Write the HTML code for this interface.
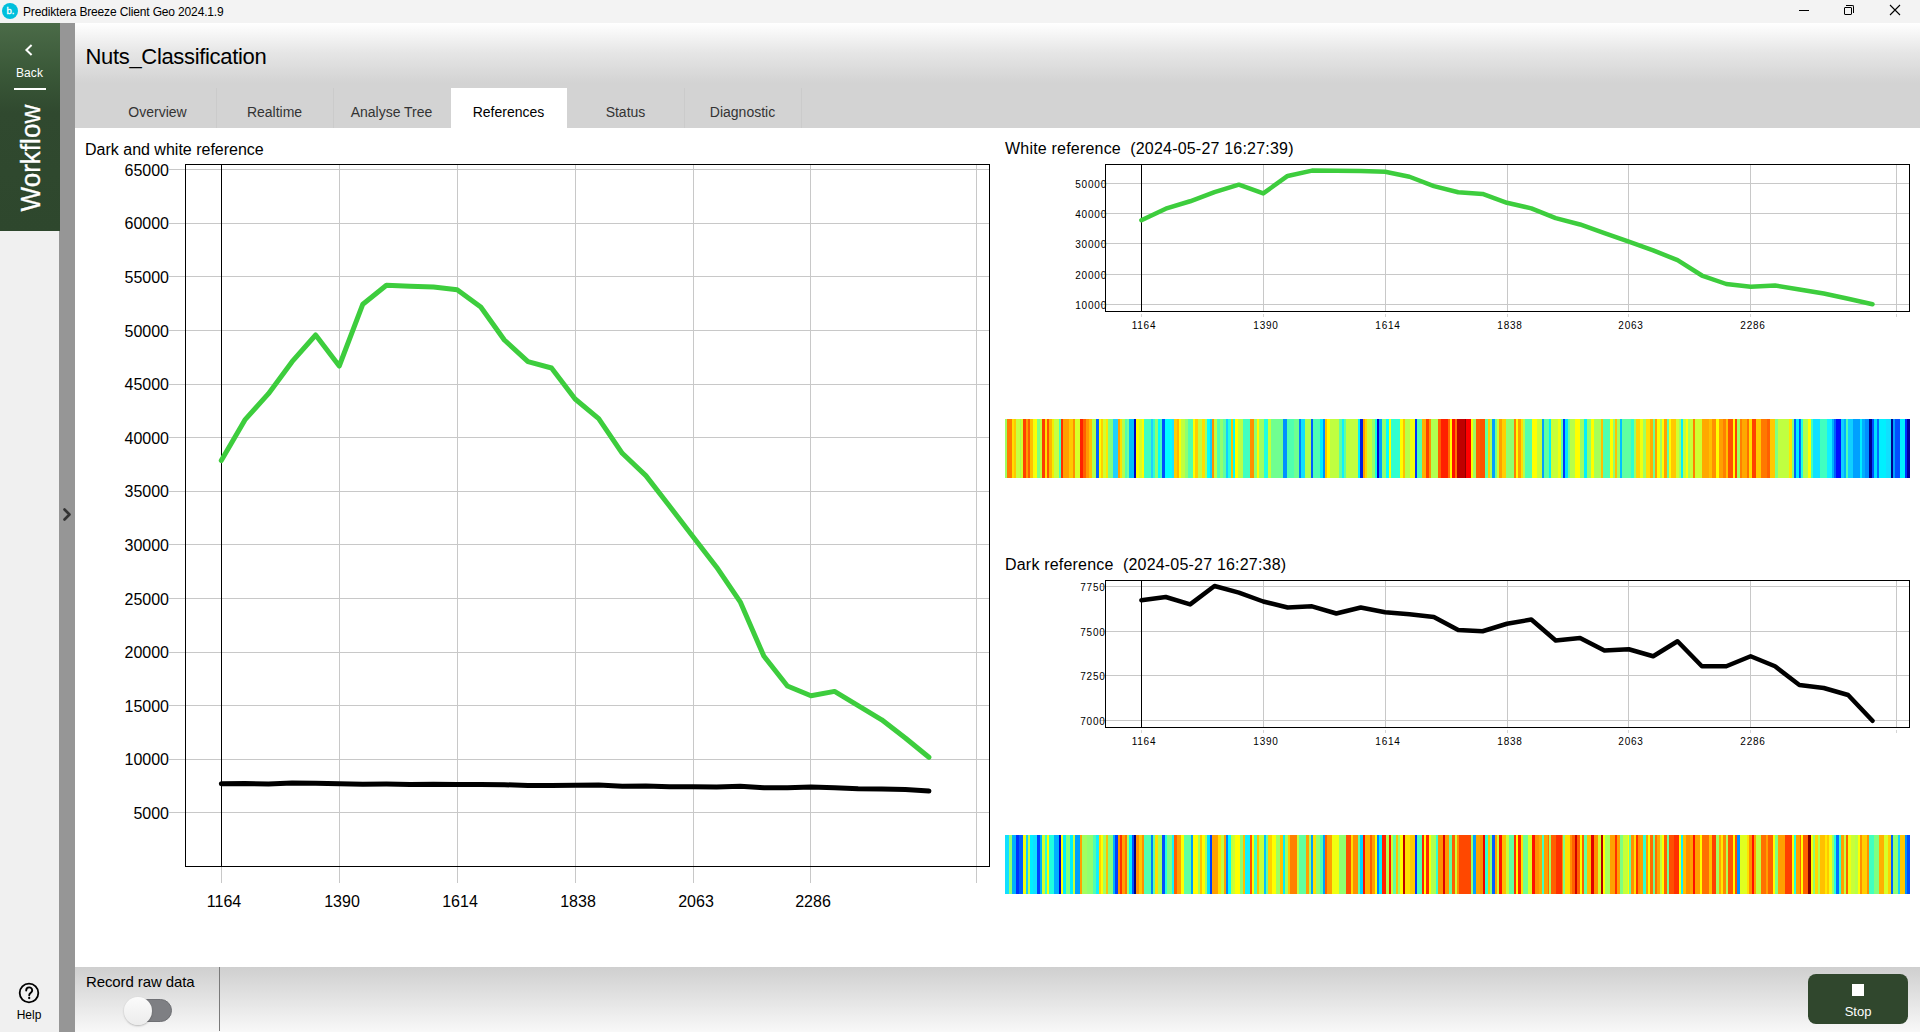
<!DOCTYPE html>
<html><head><meta charset="utf-8"><title>Prediktera Breeze Client Geo 2024.1.9</title>
<style>
html,body{margin:0;padding:0;width:1920px;height:1032px;overflow:hidden;background:#fff;}
body{position:relative;font-family:"Liberation Sans", sans-serif;}
.a{position:absolute;}
.t{position:absolute;white-space:nowrap;line-height:1;}
svg{position:absolute;left:0;top:0;}
</style></head><body>

<div class="a" style="left:0;top:0;width:1920px;height:23px;background:#f3f3f3;"></div>
<div class="a" style="left:2px;top:3px;width:16px;height:16px;border-radius:50%;background:#00bfdc;"></div>
<div class="t" style="left:6.5px;top:5.5px;font-size:9.5px;color:#fff;-webkit-text-stroke:0.3px #fff;">b.</div>
<div class="t" style="left:23px;top:6px;font-size:12px;letter-spacing:-0.15px;color:#000;">Prediktera Breeze Client Geo 2024.1.9</div>
<div class="a" style="left:1799px;top:10px;width:10px;height:1px;background:#000;"></div>
<div class="a" style="left:1844px;top:7px;width:6px;height:6px;border:1px solid #000;border-radius:1px;"></div>
<div class="a" style="left:1846px;top:5px;width:7px;height:7px;border-top:1px solid #000;border-right:1px solid #000;border-top-right-radius:2px;"></div>
<svg width="1920" height="23" style="left:0;top:0;"><path d="M1890 5 L1900 15 M1900 5 L1890 15" stroke="#000" stroke-width="1.1" fill="none"/></svg>

<div class="a" style="left:0;top:23px;width:59px;height:1009px;background:#f0f0f0;"></div>
<div class="a" style="left:59px;top:23px;width:16px;height:1009px;background:#969696;"></div>
<div class="a" style="left:0;top:23px;width:60px;height:208px;background:linear-gradient(#4b6b48 0px,#3a5838 50px,#30492f 90px,#2e472d 208px);"></div>
<svg width="60" height="230" style="left:0;top:0;"><path d="M31.6 45 L26.4 50 L31.6 55" stroke="#fff" stroke-width="2" fill="none"/></svg>
<div class="t" style="left:0;top:66.5px;width:59px;text-align:center;font-size:12px;letter-spacing:0.1px;color:#fff;">Back</div>
<div class="a" style="left:14px;top:88px;width:32px;height:2px;background:#fff;"></div>
<div class="t" style="left:-23px;top:149px;width:106px;text-align:center;font-size:28.5px;-webkit-text-stroke:0.3px #fff;font-variant-ligatures:none;color:#fff;transform:rotate(-90deg) scaleX(0.915);transform-origin:53px 14px;">Workflow</div>
<svg width="60" height="1032" style="left:0;top:0;"><circle cx="29" cy="993" r="9.3" stroke="#000" stroke-width="1.8" fill="none"/></svg>
<svg width="60" height="1032" style="left:0;top:0;"><path d="M26.2 990.6 C26.2 986.4 32.2 986.4 32.2 990.4 C32.2 992.6 29.2 992.8 29.2 995.2" stroke="#000" stroke-width="1.9" fill="none" stroke-linecap="round"/><circle cx="29.2" cy="998" r="1.15" fill="#000"/></svg>
<div class="t" style="left:0;top:1009px;width:58px;text-align:center;font-size:12px;color:#000;">Help</div>
<svg width="80" height="1032" style="left:0;top:0;"><path d="M64.5 509.5 L69.5 514.5 L64.5 519.5" stroke="#333" stroke-width="2.6" stroke-linecap="round" stroke-linejoin="round" fill="none"/></svg>

<div class="a" style="left:75px;top:23px;width:1845px;height:65px;background:linear-gradient(#ffffff 0%,#e6e6e6 45%,#d3d3d3 92%,#d3d3d3 100%);"></div>
<div class="t" style="left:85.5px;top:46px;font-size:22px;letter-spacing:-0.33px;color:#000;">Nuts_Classification</div>
<div class="a" style="left:75px;top:88px;width:1845px;height:40px;background:#d3d3d3;"></div>

<div class="t" style="left:99px;top:104.5px;width:117px;text-align:center;font-size:14px;color:#333;">Overview</div>
<div class="t" style="left:216px;top:104.5px;width:117px;text-align:center;font-size:14px;color:#333;">Realtime</div>
<div class="t" style="left:333px;top:104.5px;width:117px;text-align:center;font-size:14px;color:#333;">Analyse Tree</div>
<div class="a" style="left:451px;top:88px;width:116px;height:40px;background:#fff;"></div>
<div class="t" style="left:450px;top:104.5px;width:117px;text-align:center;font-size:14px;color:#000;">References</div>
<div class="t" style="left:567px;top:104.5px;width:117px;text-align:center;font-size:14px;color:#333;">Status</div>
<div class="t" style="left:684px;top:104.5px;width:117px;text-align:center;font-size:14px;color:#333;">Diagnostic</div>
<div class="a" style="left:216px;top:88px;width:1px;height:40px;background:#cbcbcb;"></div>
<div class="a" style="left:333px;top:88px;width:1px;height:40px;background:#cbcbcb;"></div>
<div class="a" style="left:684px;top:88px;width:1px;height:40px;background:#cbcbcb;"></div>
<div class="a" style="left:801px;top:88px;width:1px;height:40px;background:#cbcbcb;"></div>
<svg width="1920" height="1032" style="left:0;top:0;" shape-rendering="crispEdges">
<line x1="169" y1="812.5" x2="989" y2="812.5" stroke="#c8c8c8" stroke-width="1"/>
<line x1="169" y1="759.5" x2="989" y2="759.5" stroke="#c8c8c8" stroke-width="1"/>
<line x1="169" y1="705.5" x2="989" y2="705.5" stroke="#c8c8c8" stroke-width="1"/>
<line x1="169" y1="652.5" x2="989" y2="652.5" stroke="#c8c8c8" stroke-width="1"/>
<line x1="169" y1="598.5" x2="989" y2="598.5" stroke="#c8c8c8" stroke-width="1"/>
<line x1="169" y1="544.5" x2="989" y2="544.5" stroke="#c8c8c8" stroke-width="1"/>
<line x1="169" y1="491.5" x2="989" y2="491.5" stroke="#c8c8c8" stroke-width="1"/>
<line x1="169" y1="437.5" x2="989" y2="437.5" stroke="#c8c8c8" stroke-width="1"/>
<line x1="169" y1="384.5" x2="989" y2="384.5" stroke="#c8c8c8" stroke-width="1"/>
<line x1="169" y1="330.5" x2="989" y2="330.5" stroke="#c8c8c8" stroke-width="1"/>
<line x1="169" y1="276.5" x2="989" y2="276.5" stroke="#c8c8c8" stroke-width="1"/>
<line x1="169" y1="223.5" x2="989" y2="223.5" stroke="#c8c8c8" stroke-width="1"/>
<line x1="169" y1="169.5" x2="989" y2="169.5" stroke="#c8c8c8" stroke-width="1"/>
<line x1="339.5" y1="165" x2="339.5" y2="883" stroke="#c8c8c8" stroke-width="1"/>
<line x1="457.5" y1="165" x2="457.5" y2="883" stroke="#c8c8c8" stroke-width="1"/>
<line x1="575.5" y1="165" x2="575.5" y2="883" stroke="#c8c8c8" stroke-width="1"/>
<line x1="693.5" y1="165" x2="693.5" y2="883" stroke="#c8c8c8" stroke-width="1"/>
<line x1="810.5" y1="165" x2="810.5" y2="883" stroke="#c8c8c8" stroke-width="1"/>
<line x1="976.5" y1="165" x2="976.5" y2="883" stroke="#c8c8c8" stroke-width="1"/>
<line x1="221.5" y1="866" x2="221.5" y2="883" stroke="#c8c8c8" stroke-width="1"/>
<line x1="221.5" y1="165" x2="221.5" y2="866" stroke="#000" stroke-width="1"/>
<rect x="185.5" y="164.5" width="804" height="702" fill="none" stroke="#000" stroke-width="1"/>
</svg>
<svg width="1920" height="1032" style="left:0;top:0;"><polyline points="221.30,460.60 244.89,419.90 268.47,393.70 292.06,361.70 315.65,335.00 339.24,366.00 362.82,304.20 386.41,285.30 410.00,286.20 433.58,287.00 457.17,289.70 480.76,307.00 504.34,340.00 527.93,361.70 551.52,368.00 575.11,399.00 598.69,418.70 622.28,453.30 645.87,475.60 669.45,506.00 693.04,536.70 716.63,567.20 740.21,601.80 763.80,656.00 787.39,686.00 810.97,695.80 834.56,691.40 858.15,705.60 881.74,719.80 905.32,738.00 928.91,757.30" fill="none" stroke="#3dcd3d" stroke-width="5" stroke-linejoin="round" stroke-linecap="round"/><polyline points="221.30,783.75 244.89,783.55 268.47,783.99 292.06,782.89 315.65,783.29 339.24,783.82 362.82,784.18 386.41,784.11 410.00,784.54 433.58,784.18 457.17,784.47 480.76,784.58 504.34,784.75 527.93,785.53 551.52,785.60 575.11,785.15 598.69,784.90 622.28,786.16 645.87,786.01 669.45,786.76 693.04,786.68 716.63,787.10 740.21,786.20 763.80,787.70 787.39,787.70 810.97,787.10 834.56,787.70 858.15,788.83 881.74,789.01 905.32,789.43 928.91,790.97" fill="none" stroke="#000" stroke-width="5" stroke-linejoin="round" stroke-linecap="round"/></svg>
<div class="t" style="left:85px;top:142px;font-size:16px;color:#000;">Dark and white reference</div>
<div class="t" style="left:62px;top:805.9px;width:107px;text-align:right;font-size:16px;color:#000;">5000</div>
<div class="t" style="left:62px;top:752.3px;width:107px;text-align:right;font-size:16px;color:#000;">10000</div>
<div class="t" style="left:62px;top:698.7px;width:107px;text-align:right;font-size:16px;color:#000;">15000</div>
<div class="t" style="left:62px;top:645.1px;width:107px;text-align:right;font-size:16px;color:#000;">20000</div>
<div class="t" style="left:62px;top:591.5px;width:107px;text-align:right;font-size:16px;color:#000;">25000</div>
<div class="t" style="left:62px;top:537.9px;width:107px;text-align:right;font-size:16px;color:#000;">30000</div>
<div class="t" style="left:62px;top:484.3px;width:107px;text-align:right;font-size:16px;color:#000;">35000</div>
<div class="t" style="left:62px;top:430.7px;width:107px;text-align:right;font-size:16px;color:#000;">40000</div>
<div class="t" style="left:62px;top:377.1px;width:107px;text-align:right;font-size:16px;color:#000;">45000</div>
<div class="t" style="left:62px;top:323.5px;width:107px;text-align:right;font-size:16px;color:#000;">50000</div>
<div class="t" style="left:62px;top:269.9px;width:107px;text-align:right;font-size:16px;color:#000;">55000</div>
<div class="t" style="left:62px;top:216.3px;width:107px;text-align:right;font-size:16px;color:#000;">60000</div>
<div class="t" style="left:62px;top:162.7px;width:107px;text-align:right;font-size:16px;color:#000;">65000</div>
<div class="t" style="left:174.0px;top:894px;width:100px;text-align:center;font-size:16px;color:#000;">1164</div>
<div class="t" style="left:292.0px;top:894px;width:100px;text-align:center;font-size:16px;color:#000;">1390</div>
<div class="t" style="left:410.0px;top:894px;width:100px;text-align:center;font-size:16px;color:#000;">1614</div>
<div class="t" style="left:528.0px;top:894px;width:100px;text-align:center;font-size:16px;color:#000;">1838</div>
<div class="t" style="left:646.0px;top:894px;width:100px;text-align:center;font-size:16px;color:#000;">2063</div>
<div class="t" style="left:763.0px;top:894px;width:100px;text-align:center;font-size:16px;color:#000;">2286</div>
<svg width="1920" height="1032" style="left:0;top:0;" shape-rendering="crispEdges">
<line x1="1100" y1="183.5" x2="1909" y2="183.5" stroke="#c8c8c8" stroke-width="1"/>
<line x1="1100" y1="213.5" x2="1909" y2="213.5" stroke="#c8c8c8" stroke-width="1"/>
<line x1="1100" y1="243.5" x2="1909" y2="243.5" stroke="#c8c8c8" stroke-width="1"/>
<line x1="1100" y1="274.5" x2="1909" y2="274.5" stroke="#c8c8c8" stroke-width="1"/>
<line x1="1100" y1="304.5" x2="1909" y2="304.5" stroke="#c8c8c8" stroke-width="1"/>
<line x1="1263.5" y1="164.5" x2="1263.5" y2="311.5" stroke="#c8c8c8" stroke-width="1"/>
<line x1="1263.5" y1="313.5" x2="1263.5" y2="316.5" stroke="#d4d4d4" stroke-width="1"/>
<line x1="1385.5" y1="164.5" x2="1385.5" y2="311.5" stroke="#c8c8c8" stroke-width="1"/>
<line x1="1385.5" y1="313.5" x2="1385.5" y2="316.5" stroke="#d4d4d4" stroke-width="1"/>
<line x1="1507.5" y1="164.5" x2="1507.5" y2="311.5" stroke="#c8c8c8" stroke-width="1"/>
<line x1="1507.5" y1="313.5" x2="1507.5" y2="316.5" stroke="#d4d4d4" stroke-width="1"/>
<line x1="1628.5" y1="164.5" x2="1628.5" y2="311.5" stroke="#c8c8c8" stroke-width="1"/>
<line x1="1628.5" y1="313.5" x2="1628.5" y2="316.5" stroke="#d4d4d4" stroke-width="1"/>
<line x1="1750.5" y1="164.5" x2="1750.5" y2="311.5" stroke="#c8c8c8" stroke-width="1"/>
<line x1="1750.5" y1="313.5" x2="1750.5" y2="316.5" stroke="#d4d4d4" stroke-width="1"/>
<line x1="1896.5" y1="164.5" x2="1896.5" y2="311.5" stroke="#c8c8c8" stroke-width="1"/>
<line x1="1896.5" y1="313.5" x2="1896.5" y2="316.5" stroke="#d4d4d4" stroke-width="1"/>
<line x1="1141.5" y1="313.5" x2="1141.5" y2="316.5" stroke="#d4d4d4" stroke-width="1"/>
<line x1="1141.5" y1="164.5" x2="1141.5" y2="311.5" stroke="#000" stroke-width="1"/>
<rect x="1105.5" y="164.5" width="804" height="147.0" fill="none" stroke="#000" stroke-width="1"/>
</svg>
<svg width="1920" height="1032" style="left:0;top:0;"><polyline points="1141.40,220.20 1165.77,208.68 1190.14,201.27 1214.51,192.21 1238.88,184.66 1263.25,193.43 1287.62,175.94 1311.99,170.59 1336.36,170.84 1360.73,171.07 1385.10,171.83 1409.47,176.73 1433.84,186.07 1458.21,192.21 1482.58,193.99 1506.95,202.77 1531.32,208.34 1555.69,218.14 1580.06,224.45 1604.43,233.05 1628.80,241.74 1653.17,250.37 1677.54,260.17 1701.91,275.51 1726.28,284.00 1750.65,286.77 1775.02,285.52 1799.39,289.54 1823.76,293.56 1848.13,298.71 1872.50,304.18" fill="none" stroke="#3dcd3d" stroke-width="4.5" stroke-linejoin="round" stroke-linecap="round"/></svg>
<div class="t" style="left:1005px;top:141px;font-size:16px;letter-spacing:0.2px;color:#000;white-space:pre;">White reference  (2024-05-27 16:27:39)</div>
<div class="t" style="left:1042px;top:179.7px;width:65px;text-align:right;font-size:10px;letter-spacing:0.8px;color:#000;">50000</div>
<div class="t" style="left:1042px;top:210.1px;width:65px;text-align:right;font-size:10px;letter-spacing:0.8px;color:#000;">40000</div>
<div class="t" style="left:1042px;top:240.4px;width:65px;text-align:right;font-size:10px;letter-spacing:0.8px;color:#000;">30000</div>
<div class="t" style="left:1042px;top:270.8px;width:65px;text-align:right;font-size:10px;letter-spacing:0.8px;color:#000;">20000</div>
<div class="t" style="left:1042px;top:301.1px;width:65px;text-align:right;font-size:10px;letter-spacing:0.8px;color:#000;">10000</div>
<div class="t" style="left:1114.0px;top:321.0px;width:60px;text-align:center;font-size:10px;letter-spacing:0.8px;color:#000;">1164</div>
<div class="t" style="left:1236.0px;top:321.0px;width:60px;text-align:center;font-size:10px;letter-spacing:0.8px;color:#000;">1390</div>
<div class="t" style="left:1358.0px;top:321.0px;width:60px;text-align:center;font-size:10px;letter-spacing:0.8px;color:#000;">1614</div>
<div class="t" style="left:1480.0px;top:321.0px;width:60px;text-align:center;font-size:10px;letter-spacing:0.8px;color:#000;">1838</div>
<div class="t" style="left:1601.0px;top:321.0px;width:60px;text-align:center;font-size:10px;letter-spacing:0.8px;color:#000;">2063</div>
<div class="t" style="left:1723.0px;top:321.0px;width:60px;text-align:center;font-size:10px;letter-spacing:0.8px;color:#000;">2286</div>
<svg width="1920" height="1032" style="left:0;top:0;" shape-rendering="crispEdges">
<line x1="1100" y1="586.5" x2="1909" y2="586.5" stroke="#c8c8c8" stroke-width="1"/>
<line x1="1100" y1="631.5" x2="1909" y2="631.5" stroke="#c8c8c8" stroke-width="1"/>
<line x1="1100" y1="675.5" x2="1909" y2="675.5" stroke="#c8c8c8" stroke-width="1"/>
<line x1="1100" y1="720.5" x2="1909" y2="720.5" stroke="#c8c8c8" stroke-width="1"/>
<line x1="1263.5" y1="580.5" x2="1263.5" y2="727.5" stroke="#c8c8c8" stroke-width="1"/>
<line x1="1263.5" y1="729.5" x2="1263.5" y2="732.5" stroke="#d4d4d4" stroke-width="1"/>
<line x1="1385.5" y1="580.5" x2="1385.5" y2="727.5" stroke="#c8c8c8" stroke-width="1"/>
<line x1="1385.5" y1="729.5" x2="1385.5" y2="732.5" stroke="#d4d4d4" stroke-width="1"/>
<line x1="1507.5" y1="580.5" x2="1507.5" y2="727.5" stroke="#c8c8c8" stroke-width="1"/>
<line x1="1507.5" y1="729.5" x2="1507.5" y2="732.5" stroke="#d4d4d4" stroke-width="1"/>
<line x1="1628.5" y1="580.5" x2="1628.5" y2="727.5" stroke="#c8c8c8" stroke-width="1"/>
<line x1="1628.5" y1="729.5" x2="1628.5" y2="732.5" stroke="#d4d4d4" stroke-width="1"/>
<line x1="1750.5" y1="580.5" x2="1750.5" y2="727.5" stroke="#c8c8c8" stroke-width="1"/>
<line x1="1750.5" y1="729.5" x2="1750.5" y2="732.5" stroke="#d4d4d4" stroke-width="1"/>
<line x1="1896.5" y1="580.5" x2="1896.5" y2="727.5" stroke="#c8c8c8" stroke-width="1"/>
<line x1="1896.5" y1="729.5" x2="1896.5" y2="732.5" stroke="#d4d4d4" stroke-width="1"/>
<line x1="1141.5" y1="729.5" x2="1141.5" y2="732.5" stroke="#d4d4d4" stroke-width="1"/>
<line x1="1141.5" y1="580.5" x2="1141.5" y2="727.5" stroke="#000" stroke-width="1"/>
<rect x="1105.5" y="580.5" width="804" height="147.0" fill="none" stroke="#000" stroke-width="1"/>
</svg>
<svg width="1920" height="1032" style="left:0;top:0;"><polyline points="1141.40,600.30 1165.77,597.00 1190.14,604.40 1214.51,586.00 1238.88,592.60 1263.25,601.50 1287.62,607.50 1311.99,606.30 1336.36,613.50 1360.73,607.50 1385.10,612.30 1409.47,614.20 1433.84,617.00 1458.21,630.00 1482.58,631.25 1506.95,623.75 1531.32,619.50 1555.69,640.50 1580.06,638.00 1604.43,650.50 1628.80,649.25 1653.17,656.25 1677.54,641.25 1701.91,666.25 1726.28,666.25 1750.65,656.25 1775.02,666.25 1799.39,685.00 1823.76,688.00 1848.13,695.00 1872.50,720.75" fill="none" stroke="#000" stroke-width="4.5" stroke-linejoin="round" stroke-linecap="round"/></svg>
<div class="t" style="left:1005px;top:557px;font-size:16px;letter-spacing:0.2px;color:#000;white-space:pre;">Dark reference  (2024-05-27 16:27:38)</div>
<div class="t" style="left:1040.7px;top:583.0px;width:65px;text-align:right;font-size:10px;letter-spacing:0.8px;color:#000;">7750</div>
<div class="t" style="left:1040.7px;top:627.7px;width:65px;text-align:right;font-size:10px;letter-spacing:0.8px;color:#000;">7500</div>
<div class="t" style="left:1040.7px;top:672.4px;width:65px;text-align:right;font-size:10px;letter-spacing:0.8px;color:#000;">7250</div>
<div class="t" style="left:1040.7px;top:717.1px;width:65px;text-align:right;font-size:10px;letter-spacing:0.8px;color:#000;">7000</div>
<div class="t" style="left:1114.0px;top:737.0px;width:60px;text-align:center;font-size:10px;letter-spacing:0.8px;color:#000;">1164</div>
<div class="t" style="left:1236.0px;top:737.0px;width:60px;text-align:center;font-size:10px;letter-spacing:0.8px;color:#000;">1390</div>
<div class="t" style="left:1358.0px;top:737.0px;width:60px;text-align:center;font-size:10px;letter-spacing:0.8px;color:#000;">1614</div>
<div class="t" style="left:1480.0px;top:737.0px;width:60px;text-align:center;font-size:10px;letter-spacing:0.8px;color:#000;">1838</div>
<div class="t" style="left:1601.0px;top:737.0px;width:60px;text-align:center;font-size:10px;letter-spacing:0.8px;color:#000;">2063</div>
<div class="t" style="left:1723.0px;top:737.0px;width:60px;text-align:center;font-size:10px;letter-spacing:0.8px;color:#000;">2286</div>
<svg width="1920" height="1032" style="left:0;top:0;" shape-rendering="crispEdges">
<rect x="1005.00" y="419" width="2.38" height="59" fill="#a0ff60"/>
<rect x="1007.08" y="419" width="5.30" height="59" fill="#ff7a00"/>
<rect x="1012.08" y="419" width="1.97" height="59" fill="#ffe000"/>
<rect x="1013.75" y="419" width="2.80" height="59" fill="#ffc800"/>
<rect x="1016.25" y="419" width="3.63" height="59" fill="#c8ff40"/>
<rect x="1019.58" y="419" width="1.55" height="59" fill="#a8ff50"/>
<rect x="1020.83" y="419" width="2.38" height="59" fill="#d0ff30"/>
<rect x="1022.92" y="419" width="3.22" height="59" fill="#ff4000"/>
<rect x="1025.83" y="419" width="2.38" height="59" fill="#ff9a00"/>
<rect x="1027.92" y="419" width="1.97" height="59" fill="#ff5a00"/>
<rect x="1029.58" y="419" width="3.63" height="59" fill="#ffc000"/>
<rect x="1032.92" y="419" width="2.38" height="59" fill="#f0ff10"/>
<rect x="1035.00" y="419" width="2.38" height="59" fill="#ffff00"/>
<rect x="1037.08" y="419" width="3.22" height="59" fill="#80ff80"/>
<rect x="1040.00" y="419" width="2.38" height="59" fill="#c0ff40"/>
<rect x="1042.08" y="419" width="3.22" height="59" fill="#ff3a00"/>
<rect x="1045.00" y="419" width="2.38" height="59" fill="#ffe000"/>
<rect x="1047.08" y="419" width="2.38" height="59" fill="#ff5000"/>
<rect x="1049.17" y="419" width="2.80" height="59" fill="#ffb400"/>
<rect x="1051.67" y="419" width="2.80" height="59" fill="#f0f000"/>
<rect x="1054.17" y="419" width="5.30" height="59" fill="#c8ff40"/>
<rect x="1059.17" y="419" width="2.38" height="59" fill="#40ffc0"/>
<rect x="1061.25" y="419" width="1.97" height="59" fill="#ff3000"/>
<rect x="1062.92" y="419" width="6.55" height="59" fill="#ffa000"/>
<rect x="1069.17" y="419" width="3.63" height="59" fill="#ffc800"/>
<rect x="1072.50" y="419" width="2.80" height="59" fill="#ff9000"/>
<rect x="1075.00" y="419" width="5.30" height="59" fill="#d8ff28"/>
<rect x="1080.00" y="419" width="2.80" height="59" fill="#ff2000"/>
<rect x="1082.50" y="419" width="3.63" height="59" fill="#ff6000"/>
<rect x="1085.83" y="419" width="3.63" height="59" fill="#ff9800"/>
<rect x="1089.17" y="419" width="2.80" height="59" fill="#ffc000"/>
<rect x="1091.67" y="419" width="4.47" height="59" fill="#b0ff50"/>
<rect x="1095.83" y="419" width="3.22" height="59" fill="#0060ff"/>
<rect x="1098.75" y="419" width="2.38" height="59" fill="#ffff00"/>
<rect x="1100.83" y="419" width="2.80" height="59" fill="#ffd000"/>
<rect x="1103.33" y="419" width="2.80" height="59" fill="#d0ff30"/>
<rect x="1105.83" y="419" width="2.38" height="59" fill="#ffe800"/>
<rect x="1107.92" y="419" width="5.30" height="59" fill="#80ff80"/>
<rect x="1112.92" y="419" width="5.30" height="59" fill="#20d0ff"/>
<rect x="1117.92" y="419" width="2.80" height="59" fill="#ffa000"/>
<rect x="1120.42" y="419" width="1.97" height="59" fill="#ffe000"/>
<rect x="1122.08" y="419" width="3.22" height="59" fill="#b0ff50"/>
<rect x="1125.00" y="419" width="2.38" height="59" fill="#50ffb0"/>
<rect x="1127.08" y="419" width="2.38" height="59" fill="#70ffa0"/>
<rect x="1129.17" y="419" width="5.30" height="59" fill="#00c0ff"/>
<rect x="1134.17" y="419" width="1.97" height="59" fill="#0000c0"/>
<rect x="1135.83" y="419" width="3.63" height="59" fill="#ffff00"/>
<rect x="1139.17" y="419" width="2.80" height="59" fill="#d8ff28"/>
<rect x="1141.67" y="419" width="2.80" height="59" fill="#ffff00"/>
<rect x="1144.17" y="419" width="6.97" height="59" fill="#40ffc0"/>
<rect x="1150.83" y="419" width="1.97" height="59" fill="#20d0ff"/>
<rect x="1152.50" y="419" width="2.80" height="59" fill="#30ffd0"/>
<rect x="1155.00" y="419" width="3.22" height="59" fill="#90ff70"/>
<rect x="1157.92" y="419" width="2.38" height="59" fill="#00ffff"/>
<rect x="1160.00" y="419" width="2.38" height="59" fill="#40ffc0"/>
<rect x="1162.08" y="419" width="3.22" height="59" fill="#0050ff"/>
<rect x="1165.00" y="419" width="7.38" height="59" fill="#00ffff"/>
<rect x="1172.08" y="419" width="2.38" height="59" fill="#20e0ff"/>
<rect x="1174.17" y="419" width="2.80" height="59" fill="#ffd000"/>
<rect x="1176.67" y="419" width="2.80" height="59" fill="#ffb800"/>
<rect x="1179.17" y="419" width="1.97" height="59" fill="#ffff00"/>
<rect x="1180.83" y="419" width="4.47" height="59" fill="#c0ff40"/>
<rect x="1185.00" y="419" width="3.63" height="59" fill="#90ff70"/>
<rect x="1188.33" y="419" width="4.88" height="59" fill="#50ffb0"/>
<rect x="1192.92" y="419" width="2.38" height="59" fill="#ffff00"/>
<rect x="1195.00" y="419" width="3.22" height="59" fill="#ffd000"/>
<rect x="1197.92" y="419" width="4.47" height="59" fill="#c0ff40"/>
<rect x="1202.08" y="419" width="3.22" height="59" fill="#ffe000"/>
<rect x="1205.00" y="419" width="2.38" height="59" fill="#a0ff60"/>
<rect x="1207.08" y="419" width="3.22" height="59" fill="#00ffff"/>
<rect x="1210.00" y="419" width="2.38" height="59" fill="#10d0ff"/>
<rect x="1212.08" y="419" width="1.97" height="59" fill="#ff9000"/>
<rect x="1213.75" y="419" width="3.22" height="59" fill="#c0ff40"/>
<rect x="1216.67" y="419" width="3.63" height="59" fill="#50ffb0"/>
<rect x="1220.00" y="419" width="3.63" height="59" fill="#90ff70"/>
<rect x="1223.33" y="419" width="3.22" height="59" fill="#60ffa0"/>
<rect x="1226.25" y="419" width="1.97" height="59" fill="#10d0ff"/>
<rect x="1227.92" y="419" width="3.22" height="59" fill="#20ffe0"/>
<rect x="1230.83" y="419" width="2.38" height="59" fill="#ffc000"/>
<rect x="1232.92" y="419" width="2.38" height="59" fill="#00ffff"/>
<rect x="1235.00" y="419" width="3.22" height="59" fill="#ffff00"/>
<rect x="1237.92" y="419" width="5.72" height="59" fill="#b8ff48"/>
<rect x="1243.33" y="419" width="6.97" height="59" fill="#40ffc0"/>
<rect x="1250.00" y="419" width="4.05" height="59" fill="#ff9000"/>
<rect x="1253.75" y="419" width="3.63" height="59" fill="#90ff70"/>
<rect x="1257.08" y="419" width="2.38" height="59" fill="#ffff00"/>
<rect x="1259.17" y="419" width="5.30" height="59" fill="#a0ff60"/>
<rect x="1264.17" y="419" width="4.47" height="59" fill="#20ffe0"/>
<rect x="1268.33" y="419" width="2.80" height="59" fill="#c8ff38"/>
<rect x="1270.83" y="419" width="12.80" height="59" fill="#70ff90"/>
<rect x="1283.33" y="419" width="4.05" height="59" fill="#0090ff"/>
<rect x="1287.08" y="419" width="7.38" height="59" fill="#50ffb0"/>
<rect x="1294.17" y="419" width="5.30" height="59" fill="#70ff90"/>
<rect x="1299.17" y="419" width="1.97" height="59" fill="#0080ff"/>
<rect x="1300.83" y="419" width="4.88" height="59" fill="#10e0ff"/>
<rect x="1305.42" y="419" width="5.72" height="59" fill="#b0ff50"/>
<rect x="1310.83" y="419" width="2.38" height="59" fill="#0060ff"/>
<rect x="1312.92" y="419" width="7.38" height="59" fill="#50ffb0"/>
<rect x="1320.00" y="419" width="3.63" height="59" fill="#00f0ff"/>
<rect x="1323.33" y="419" width="1.97" height="59" fill="#0090ff"/>
<rect x="1325.00" y="419" width="2.38" height="59" fill="#ffc000"/>
<rect x="1327.08" y="419" width="3.22" height="59" fill="#ffff00"/>
<rect x="1330.00" y="419" width="9.47" height="59" fill="#c0ff40"/>
<rect x="1339.17" y="419" width="3.22" height="59" fill="#60ffa0"/>
<rect x="1342.08" y="419" width="2.38" height="59" fill="#10f0ff"/>
<rect x="1344.17" y="419" width="1.97" height="59" fill="#60ffa0"/>
<rect x="1345.83" y="419" width="12.80" height="59" fill="#c0ff40"/>
<rect x="1358.33" y="419" width="1.97" height="59" fill="#00f0ff"/>
<rect x="1360.00" y="419" width="3.22" height="59" fill="#0020e0"/>
<rect x="1362.92" y="419" width="2.38" height="59" fill="#ffa000"/>
<rect x="1365.00" y="419" width="2.38" height="59" fill="#ffd800"/>
<rect x="1367.08" y="419" width="5.30" height="59" fill="#c8ff38"/>
<rect x="1372.08" y="419" width="3.22" height="59" fill="#90ff70"/>
<rect x="1375.00" y="419" width="2.38" height="59" fill="#10ffe0"/>
<rect x="1377.08" y="419" width="2.38" height="59" fill="#0000d0"/>
<rect x="1379.17" y="419" width="3.22" height="59" fill="#00a0ff"/>
<rect x="1382.08" y="419" width="4.47" height="59" fill="#90ff70"/>
<rect x="1386.25" y="419" width="3.22" height="59" fill="#00ffff"/>
<rect x="1389.17" y="419" width="2.38" height="59" fill="#ffff00"/>
<rect x="1391.25" y="419" width="9.47" height="59" fill="#30ffd0"/>
<rect x="1400.42" y="419" width="3.22" height="59" fill="#ffff00"/>
<rect x="1403.33" y="419" width="1.97" height="59" fill="#ffc000"/>
<rect x="1405.00" y="419" width="5.30" height="59" fill="#b8ff48"/>
<rect x="1410.00" y="419" width="5.30" height="59" fill="#f0ff10"/>
<rect x="1415.00" y="419" width="2.38" height="59" fill="#0030ff"/>
<rect x="1417.08" y="419" width="5.30" height="59" fill="#50ffb0"/>
<rect x="1422.08" y="419" width="4.05" height="59" fill="#ffb000"/>
<rect x="1425.83" y="419" width="3.63" height="59" fill="#ff4000"/>
<rect x="1429.17" y="419" width="1.97" height="59" fill="#ff9000"/>
<rect x="1430.83" y="419" width="7.38" height="59" fill="#b0ff50"/>
<rect x="1437.92" y="419" width="3.22" height="59" fill="#ff6000"/>
<rect x="1440.83" y="419" width="7.80" height="59" fill="#ff2000"/>
<rect x="1448.33" y="419" width="1.97" height="59" fill="#ff7000"/>
<rect x="1450.00" y="419" width="2.38" height="59" fill="#ffff00"/>
<rect x="1452.08" y="419" width="3.22" height="59" fill="#ff1000"/>
<rect x="1455.00" y="419" width="2.38" height="59" fill="#ff7000"/>
<rect x="1457.08" y="419" width="7.80" height="59" fill="#c00000"/>
<rect x="1464.58" y="419" width="1.55" height="59" fill="#900000"/>
<rect x="1465.83" y="419" width="5.30" height="59" fill="#ff0000"/>
<rect x="1470.83" y="419" width="2.38" height="59" fill="#ffff00"/>
<rect x="1472.92" y="419" width="3.22" height="59" fill="#a0ff60"/>
<rect x="1475.83" y="419" width="4.47" height="59" fill="#ff6000"/>
<rect x="1480.00" y="419" width="5.30" height="59" fill="#ff5000"/>
<rect x="1485.00" y="419" width="3.22" height="59" fill="#60ffa0"/>
<rect x="1487.92" y="419" width="2.38" height="59" fill="#ffd000"/>
<rect x="1490.00" y="419" width="2.38" height="59" fill="#b0ff50"/>
<rect x="1492.08" y="419" width="3.22" height="59" fill="#00a0ff"/>
<rect x="1495.00" y="419" width="2.38" height="59" fill="#70ff90"/>
<rect x="1497.08" y="419" width="2.38" height="59" fill="#d0ff30"/>
<rect x="1499.17" y="419" width="3.22" height="59" fill="#ffa000"/>
<rect x="1502.08" y="419" width="4.05" height="59" fill="#ffd000"/>
<rect x="1505.83" y="419" width="8.22" height="59" fill="#90ff70"/>
<rect x="1513.75" y="419" width="2.38" height="59" fill="#ff8000"/>
<rect x="1515.83" y="419" width="2.38" height="59" fill="#ffff00"/>
<rect x="1517.92" y="419" width="3.63" height="59" fill="#ffa000"/>
<rect x="1521.25" y="419" width="1.97" height="59" fill="#ffe000"/>
<rect x="1522.92" y="419" width="2.38" height="59" fill="#b0ff50"/>
<rect x="1525.00" y="419" width="7.38" height="59" fill="#50ffb0"/>
<rect x="1532.08" y="419" width="5.30" height="59" fill="#ffff00"/>
<rect x="1537.08" y="419" width="5.30" height="59" fill="#c8ff38"/>
<rect x="1542.08" y="419" width="2.38" height="59" fill="#00a0ff"/>
<rect x="1544.17" y="419" width="5.30" height="59" fill="#60ffa0"/>
<rect x="1549.17" y="419" width="1.97" height="59" fill="#00f0ff"/>
<rect x="1550.83" y="419" width="7.38" height="59" fill="#c8ff38"/>
<rect x="1557.92" y="419" width="3.22" height="59" fill="#f0ff10"/>
<rect x="1560.83" y="419" width="2.38" height="59" fill="#60ffa0"/>
<rect x="1562.92" y="419" width="2.38" height="59" fill="#0030ff"/>
<rect x="1565.00" y="419" width="3.22" height="59" fill="#00e0ff"/>
<rect x="1567.92" y="419" width="2.38" height="59" fill="#70ff90"/>
<rect x="1570.00" y="419" width="5.30" height="59" fill="#b8ff48"/>
<rect x="1575.00" y="419" width="5.30" height="59" fill="#ffff00"/>
<rect x="1580.00" y="419" width="4.47" height="59" fill="#a0ff60"/>
<rect x="1584.17" y="419" width="3.22" height="59" fill="#00f0ff"/>
<rect x="1587.08" y="419" width="4.05" height="59" fill="#90ff70"/>
<rect x="1590.83" y="419" width="3.63" height="59" fill="#ffff00"/>
<rect x="1594.17" y="419" width="6.97" height="59" fill="#a8ff58"/>
<rect x="1600.83" y="419" width="2.38" height="59" fill="#ffc000"/>
<rect x="1602.92" y="419" width="7.38" height="59" fill="#50ffb0"/>
<rect x="1610.00" y="419" width="3.63" height="59" fill="#ffff00"/>
<rect x="1613.33" y="419" width="1.97" height="59" fill="#90ff70"/>
<rect x="1615.00" y="419" width="2.38" height="59" fill="#ffc000"/>
<rect x="1617.08" y="419" width="3.22" height="59" fill="#a0ff60"/>
<rect x="1620.00" y="419" width="2.38" height="59" fill="#00c0ff"/>
<rect x="1622.08" y="419" width="9.05" height="59" fill="#60ffa0"/>
<rect x="1630.83" y="419" width="3.22" height="59" fill="#30ffd0"/>
<rect x="1633.75" y="419" width="2.80" height="59" fill="#a0ff60"/>
<rect x="1636.25" y="419" width="4.05" height="59" fill="#ffd800"/>
<rect x="1640.00" y="419" width="2.80" height="59" fill="#f0ff10"/>
<rect x="1642.50" y="419" width="4.05" height="59" fill="#a0ff60"/>
<rect x="1646.25" y="419" width="4.05" height="59" fill="#ffe000"/>
<rect x="1650.00" y="419" width="3.22" height="59" fill="#ffb000"/>
<rect x="1652.92" y="419" width="2.38" height="59" fill="#70ff90"/>
<rect x="1655.00" y="419" width="2.38" height="59" fill="#ffa000"/>
<rect x="1657.08" y="419" width="3.22" height="59" fill="#ffff00"/>
<rect x="1660.00" y="419" width="2.38" height="59" fill="#a0ff60"/>
<rect x="1662.08" y="419" width="2.38" height="59" fill="#ffff00"/>
<rect x="1664.17" y="419" width="3.22" height="59" fill="#ffa000"/>
<rect x="1667.08" y="419" width="1.97" height="59" fill="#60ffa0"/>
<rect x="1668.75" y="419" width="2.38" height="59" fill="#ffff00"/>
<rect x="1670.83" y="419" width="5.30" height="59" fill="#ffc800"/>
<rect x="1675.83" y="419" width="3.63" height="59" fill="#d0ff30"/>
<rect x="1679.17" y="419" width="1.97" height="59" fill="#a0ff60"/>
<rect x="1680.83" y="419" width="2.80" height="59" fill="#00f0ff"/>
<rect x="1683.33" y="419" width="2.80" height="59" fill="#c0ff40"/>
<rect x="1685.83" y="419" width="2.38" height="59" fill="#ffff00"/>
<rect x="1687.92" y="419" width="2.38" height="59" fill="#a0ff60"/>
<rect x="1690.00" y="419" width="3.22" height="59" fill="#c8ff38"/>
<rect x="1692.92" y="419" width="2.38" height="59" fill="#ff8000"/>
<rect x="1695.00" y="419" width="7.38" height="59" fill="#d0ff30"/>
<rect x="1702.08" y="419" width="7.38" height="59" fill="#ffa800"/>
<rect x="1709.17" y="419" width="3.22" height="59" fill="#ffc000"/>
<rect x="1712.08" y="419" width="4.05" height="59" fill="#ff9000"/>
<rect x="1715.83" y="419" width="3.63" height="59" fill="#ffff00"/>
<rect x="1719.17" y="419" width="4.05" height="59" fill="#ffa000"/>
<rect x="1722.92" y="419" width="3.22" height="59" fill="#ff8000"/>
<rect x="1725.83" y="419" width="2.38" height="59" fill="#ffc000"/>
<rect x="1727.92" y="419" width="5.30" height="59" fill="#ff5000"/>
<rect x="1732.92" y="419" width="2.38" height="59" fill="#ffff00"/>
<rect x="1735.00" y="419" width="2.38" height="59" fill="#ff4000"/>
<rect x="1737.08" y="419" width="3.22" height="59" fill="#a0ff60"/>
<rect x="1740.00" y="419" width="2.38" height="59" fill="#ff8000"/>
<rect x="1742.08" y="419" width="5.30" height="59" fill="#ffa800"/>
<rect x="1747.08" y="419" width="1.97" height="59" fill="#ff7000"/>
<rect x="1748.75" y="419" width="3.22" height="59" fill="#ffe000"/>
<rect x="1751.67" y="419" width="4.47" height="59" fill="#ff4000"/>
<rect x="1755.83" y="419" width="5.30" height="59" fill="#ffc800"/>
<rect x="1760.83" y="419" width="6.13" height="59" fill="#ff7800"/>
<rect x="1766.67" y="419" width="3.63" height="59" fill="#ff6000"/>
<rect x="1770.00" y="419" width="5.30" height="59" fill="#ffc800"/>
<rect x="1775.00" y="419" width="3.22" height="59" fill="#80ff80"/>
<rect x="1777.92" y="419" width="11.55" height="59" fill="#c0ff40"/>
<rect x="1789.17" y="419" width="2.80" height="59" fill="#ffe800"/>
<rect x="1791.67" y="419" width="2.38" height="59" fill="#80ff80"/>
<rect x="1793.75" y="419" width="2.38" height="59" fill="#0060ff"/>
<rect x="1795.83" y="419" width="3.22" height="59" fill="#00f0ff"/>
<rect x="1798.75" y="419" width="1.55" height="59" fill="#0050ff"/>
<rect x="1800.00" y="419" width="1.13" height="59" fill="#0070ff"/>
<rect x="1800.83" y="419" width="2.67" height="59" fill="#20ffe0"/>
<rect x="1803.20" y="419" width="5.04" height="59" fill="#b0ff50"/>
<rect x="1807.94" y="419" width="3.35" height="59" fill="#ffff00"/>
<rect x="1810.99" y="419" width="2.33" height="59" fill="#40ffc0"/>
<rect x="1813.02" y="419" width="7.07" height="59" fill="#10e0ff"/>
<rect x="1819.79" y="419" width="7.07" height="59" fill="#40ffc0"/>
<rect x="1826.56" y="419" width="6.06" height="59" fill="#10f0ff"/>
<rect x="1832.32" y="419" width="2.33" height="59" fill="#00b0ff"/>
<rect x="1834.35" y="419" width="1.99" height="59" fill="#0060ff"/>
<rect x="1836.04" y="419" width="5.04" height="59" fill="#0010ff"/>
<rect x="1840.78" y="419" width="3.69" height="59" fill="#10d0ff"/>
<rect x="1844.17" y="419" width="2.33" height="59" fill="#00b0ff"/>
<rect x="1846.20" y="419" width="1.99" height="59" fill="#50ffb0"/>
<rect x="1847.89" y="419" width="5.38" height="59" fill="#10d0ff"/>
<rect x="1852.97" y="419" width="7.75" height="59" fill="#00a0ff"/>
<rect x="1860.42" y="419" width="1.99" height="59" fill="#00f0ff"/>
<rect x="1862.11" y="419" width="3.35" height="59" fill="#00b0ff"/>
<rect x="1865.16" y="419" width="4.36" height="59" fill="#0090ff"/>
<rect x="1869.22" y="419" width="3.01" height="59" fill="#00008f"/>
<rect x="1871.93" y="419" width="2.33" height="59" fill="#0050ff"/>
<rect x="1873.96" y="419" width="3.35" height="59" fill="#00e0ff"/>
<rect x="1877.01" y="419" width="2.33" height="59" fill="#0070ff"/>
<rect x="1879.04" y="419" width="7.41" height="59" fill="#00f0ff"/>
<rect x="1886.15" y="419" width="5.04" height="59" fill="#10e0ff"/>
<rect x="1890.89" y="419" width="2.33" height="59" fill="#000090"/>
<rect x="1892.92" y="419" width="2.33" height="59" fill="#00a0ff"/>
<rect x="1894.95" y="419" width="5.38" height="59" fill="#0050ff"/>
<rect x="1900.03" y="419" width="5.38" height="59" fill="#00f0ff"/>
<rect x="1905.10" y="419" width="2.33" height="59" fill="#0030ff"/>
<rect x="1907.14" y="419" width="3.01" height="59" fill="#0000a0"/>
</svg>
<svg width="1920" height="1032" style="left:0;top:0;" shape-rendering="crispEdges">
<rect x="1005.00" y="835" width="4.05" height="59" fill="#10e0ff"/>
<rect x="1008.75" y="835" width="3.63" height="59" fill="#90ff70"/>
<rect x="1012.08" y="835" width="4.05" height="59" fill="#00b0ff"/>
<rect x="1015.83" y="835" width="3.63" height="59" fill="#0030ff"/>
<rect x="1019.17" y="835" width="4.05" height="59" fill="#0060ff"/>
<rect x="1022.92" y="835" width="3.63" height="59" fill="#f0ff10"/>
<rect x="1026.25" y="835" width="1.97" height="59" fill="#10d0ff"/>
<rect x="1027.92" y="835" width="2.38" height="59" fill="#c8ff38"/>
<rect x="1030.00" y="835" width="3.63" height="59" fill="#00f0ff"/>
<rect x="1033.33" y="835" width="4.05" height="59" fill="#10e0ff"/>
<rect x="1037.08" y="835" width="3.22" height="59" fill="#0040ff"/>
<rect x="1040.00" y="835" width="2.38" height="59" fill="#00b0ff"/>
<rect x="1042.08" y="835" width="3.22" height="59" fill="#d0ff30"/>
<rect x="1045.00" y="835" width="2.38" height="59" fill="#30ffd0"/>
<rect x="1047.08" y="835" width="2.38" height="59" fill="#ffff00"/>
<rect x="1049.17" y="835" width="5.30" height="59" fill="#20ffe0"/>
<rect x="1054.17" y="835" width="5.30" height="59" fill="#00b0ff"/>
<rect x="1059.17" y="835" width="1.97" height="59" fill="#0000d0"/>
<rect x="1060.83" y="835" width="2.38" height="59" fill="#ffff00"/>
<rect x="1062.92" y="835" width="3.22" height="59" fill="#00f0ff"/>
<rect x="1065.83" y="835" width="4.47" height="59" fill="#80ff80"/>
<rect x="1070.00" y="835" width="3.22" height="59" fill="#00f0ff"/>
<rect x="1072.92" y="835" width="2.38" height="59" fill="#c8ff38"/>
<rect x="1075.00" y="835" width="4.88" height="59" fill="#00a0ff"/>
<rect x="1079.58" y="835" width="2.80" height="59" fill="#ffa000"/>
<rect x="1082.08" y="835" width="5.30" height="59" fill="#a0ff60"/>
<rect x="1087.08" y="835" width="5.72" height="59" fill="#90ff70"/>
<rect x="1092.50" y="835" width="3.63" height="59" fill="#50ffb0"/>
<rect x="1095.83" y="835" width="3.63" height="59" fill="#10f0ff"/>
<rect x="1099.17" y="835" width="2.38" height="59" fill="#ffd000"/>
<rect x="1101.25" y="835" width="2.38" height="59" fill="#ffff00"/>
<rect x="1103.33" y="835" width="2.80" height="59" fill="#a0ff60"/>
<rect x="1105.83" y="835" width="2.38" height="59" fill="#ffc000"/>
<rect x="1107.92" y="835" width="5.72" height="59" fill="#80ff80"/>
<rect x="1113.33" y="835" width="2.38" height="59" fill="#00b0ff"/>
<rect x="1115.42" y="835" width="2.80" height="59" fill="#0040ff"/>
<rect x="1117.92" y="835" width="2.38" height="59" fill="#ff9000"/>
<rect x="1120.00" y="835" width="1.97" height="59" fill="#ff3000"/>
<rect x="1121.67" y="835" width="3.63" height="59" fill="#ffa000"/>
<rect x="1125.00" y="835" width="2.38" height="59" fill="#ff7000"/>
<rect x="1127.08" y="835" width="2.38" height="59" fill="#a0ff60"/>
<rect x="1129.17" y="835" width="3.22" height="59" fill="#00f0ff"/>
<rect x="1132.08" y="835" width="2.38" height="59" fill="#0050ff"/>
<rect x="1134.17" y="835" width="1.97" height="59" fill="#000080"/>
<rect x="1135.83" y="835" width="3.63" height="59" fill="#ff9000"/>
<rect x="1139.17" y="835" width="2.80" height="59" fill="#ffc800"/>
<rect x="1141.67" y="835" width="2.80" height="59" fill="#ff9000"/>
<rect x="1144.17" y="835" width="6.97" height="59" fill="#50ffb0"/>
<rect x="1150.83" y="835" width="2.38" height="59" fill="#0080ff"/>
<rect x="1152.92" y="835" width="2.38" height="59" fill="#60ffa0"/>
<rect x="1155.00" y="835" width="3.63" height="59" fill="#ffe000"/>
<rect x="1158.33" y="835" width="1.97" height="59" fill="#a0ff60"/>
<rect x="1160.00" y="835" width="2.38" height="59" fill="#a0ff60"/>
<rect x="1162.08" y="835" width="3.22" height="59" fill="#0050ff"/>
<rect x="1165.00" y="835" width="2.38" height="59" fill="#20ffe0"/>
<rect x="1167.08" y="835" width="5.30" height="59" fill="#80ff80"/>
<rect x="1172.08" y="835" width="2.38" height="59" fill="#10f0ff"/>
<rect x="1174.17" y="835" width="3.22" height="59" fill="#ff6000"/>
<rect x="1177.08" y="835" width="4.05" height="59" fill="#ffa000"/>
<rect x="1180.83" y="835" width="3.63" height="59" fill="#ffff00"/>
<rect x="1184.17" y="835" width="6.97" height="59" fill="#60ffa0"/>
<rect x="1190.83" y="835" width="2.38" height="59" fill="#00a0ff"/>
<rect x="1192.92" y="835" width="5.72" height="59" fill="#ffff00"/>
<rect x="1198.33" y="835" width="1.97" height="59" fill="#a0ff60"/>
<rect x="1200.00" y="835" width="2.38" height="59" fill="#ffc000"/>
<rect x="1202.08" y="835" width="3.22" height="59" fill="#ffff00"/>
<rect x="1205.00" y="835" width="2.38" height="59" fill="#a0ff60"/>
<rect x="1207.08" y="835" width="3.22" height="59" fill="#00e0ff"/>
<rect x="1210.00" y="835" width="2.38" height="59" fill="#0040ff"/>
<rect x="1212.08" y="835" width="5.72" height="59" fill="#ffa000"/>
<rect x="1217.50" y="835" width="4.05" height="59" fill="#ffe000"/>
<rect x="1221.25" y="835" width="3.22" height="59" fill="#c0ff40"/>
<rect x="1224.17" y="835" width="2.38" height="59" fill="#ffa000"/>
<rect x="1226.25" y="835" width="2.38" height="59" fill="#0080ff"/>
<rect x="1228.33" y="835" width="2.80" height="59" fill="#00ffff"/>
<rect x="1230.83" y="835" width="2.38" height="59" fill="#c0ff40"/>
<rect x="1232.92" y="835" width="2.38" height="59" fill="#d0ff30"/>
<rect x="1235.00" y="835" width="5.30" height="59" fill="#ffff00"/>
<rect x="1240.00" y="835" width="3.22" height="59" fill="#90ff70"/>
<rect x="1242.92" y="835" width="2.38" height="59" fill="#ffc000"/>
<rect x="1245.00" y="835" width="5.30" height="59" fill="#10f0ff"/>
<rect x="1250.00" y="835" width="1.97" height="59" fill="#ff5000"/>
<rect x="1251.67" y="835" width="2.80" height="59" fill="#ffff00"/>
<rect x="1254.17" y="835" width="3.22" height="59" fill="#40ffc0"/>
<rect x="1257.08" y="835" width="2.38" height="59" fill="#ffc000"/>
<rect x="1259.17" y="835" width="5.30" height="59" fill="#c8ff38"/>
<rect x="1264.17" y="835" width="2.38" height="59" fill="#00c0ff"/>
<rect x="1266.25" y="835" width="2.38" height="59" fill="#60ffa0"/>
<rect x="1268.33" y="835" width="3.63" height="59" fill="#ffd000"/>
<rect x="1271.67" y="835" width="4.88" height="59" fill="#ffff00"/>
<rect x="1276.25" y="835" width="4.05" height="59" fill="#a0ff60"/>
<rect x="1280.00" y="835" width="3.22" height="59" fill="#ffc000"/>
<rect x="1282.92" y="835" width="2.38" height="59" fill="#00f0ff"/>
<rect x="1285.00" y="835" width="2.80" height="59" fill="#a0ff60"/>
<rect x="1287.50" y="835" width="2.80" height="59" fill="#ffc800"/>
<rect x="1290.00" y="835" width="7.38" height="59" fill="#ff8000"/>
<rect x="1297.08" y="835" width="2.38" height="59" fill="#c0ff40"/>
<rect x="1299.17" y="835" width="6.97" height="59" fill="#60ffa0"/>
<rect x="1305.83" y="835" width="3.63" height="59" fill="#ffa000"/>
<rect x="1309.17" y="835" width="1.97" height="59" fill="#a0ff60"/>
<rect x="1310.83" y="835" width="2.38" height="59" fill="#00a0ff"/>
<rect x="1312.92" y="835" width="3.22" height="59" fill="#ffe000"/>
<rect x="1315.83" y="835" width="4.47" height="59" fill="#90ff70"/>
<rect x="1320.00" y="835" width="3.63" height="59" fill="#50ffb0"/>
<rect x="1323.33" y="835" width="1.97" height="59" fill="#00a0ff"/>
<rect x="1325.00" y="835" width="2.38" height="59" fill="#ff6000"/>
<rect x="1327.08" y="835" width="5.30" height="59" fill="#ffa000"/>
<rect x="1332.08" y="835" width="7.38" height="59" fill="#f0ff10"/>
<rect x="1339.17" y="835" width="6.97" height="59" fill="#90ff70"/>
<rect x="1345.83" y="835" width="5.30" height="59" fill="#ff5000"/>
<rect x="1350.83" y="835" width="2.38" height="59" fill="#ffe000"/>
<rect x="1352.92" y="835" width="5.30" height="59" fill="#ff9000"/>
<rect x="1357.92" y="835" width="2.38" height="59" fill="#60ffa0"/>
<rect x="1360.00" y="835" width="3.22" height="59" fill="#00d0ff"/>
<rect x="1362.92" y="835" width="2.38" height="59" fill="#ff1000"/>
<rect x="1365.00" y="835" width="5.30" height="59" fill="#ffb000"/>
<rect x="1370.00" y="835" width="2.38" height="59" fill="#ff6000"/>
<rect x="1372.08" y="835" width="3.22" height="59" fill="#ffa000"/>
<rect x="1375.00" y="835" width="2.38" height="59" fill="#ffff00"/>
<rect x="1377.08" y="835" width="2.38" height="59" fill="#0080ff"/>
<rect x="1379.17" y="835" width="3.22" height="59" fill="#00f0ff"/>
<rect x="1382.08" y="835" width="4.05" height="59" fill="#ff2000"/>
<rect x="1385.83" y="835" width="3.63" height="59" fill="#b0ff50"/>
<rect x="1389.17" y="835" width="1.97" height="59" fill="#ff1000"/>
<rect x="1390.83" y="835" width="2.38" height="59" fill="#d0ff30"/>
<rect x="1392.92" y="835" width="3.63" height="59" fill="#60ffa0"/>
<rect x="1396.25" y="835" width="2.38" height="59" fill="#ffc000"/>
<rect x="1398.33" y="835" width="2.38" height="59" fill="#90ff70"/>
<rect x="1400.42" y="835" width="2.80" height="59" fill="#ffff00"/>
<rect x="1402.92" y="835" width="2.38" height="59" fill="#c00000"/>
<rect x="1405.00" y="835" width="5.30" height="59" fill="#ffe000"/>
<rect x="1410.00" y="835" width="5.30" height="59" fill="#ffc800"/>
<rect x="1415.00" y="835" width="2.38" height="59" fill="#0030ff"/>
<rect x="1417.08" y="835" width="5.30" height="59" fill="#50ffb0"/>
<rect x="1422.08" y="835" width="1.97" height="59" fill="#ff2000"/>
<rect x="1423.75" y="835" width="2.38" height="59" fill="#ffff00"/>
<rect x="1425.83" y="835" width="3.63" height="59" fill="#ff2800"/>
<rect x="1429.17" y="835" width="2.38" height="59" fill="#ffff00"/>
<rect x="1431.25" y="835" width="4.88" height="59" fill="#b0ff50"/>
<rect x="1435.83" y="835" width="2.80" height="59" fill="#30ffd0"/>
<rect x="1438.33" y="835" width="4.88" height="59" fill="#ff9000"/>
<rect x="1442.92" y="835" width="2.38" height="59" fill="#e00000"/>
<rect x="1445.00" y="835" width="4.47" height="59" fill="#ff9800"/>
<rect x="1449.17" y="835" width="3.22" height="59" fill="#60ffa0"/>
<rect x="1452.08" y="835" width="3.22" height="59" fill="#ff6000"/>
<rect x="1455.00" y="835" width="2.38" height="59" fill="#d0ff30"/>
<rect x="1457.08" y="835" width="2.38" height="59" fill="#ff9000"/>
<rect x="1459.17" y="835" width="11.97" height="59" fill="#ff4800"/>
<rect x="1470.83" y="835" width="2.38" height="59" fill="#a0ff60"/>
<rect x="1472.92" y="835" width="3.22" height="59" fill="#00a0ff"/>
<rect x="1475.83" y="835" width="4.47" height="59" fill="#ffa000"/>
<rect x="1480.00" y="835" width="3.22" height="59" fill="#ff9000"/>
<rect x="1482.92" y="835" width="2.38" height="59" fill="#ee0000"/>
<rect x="1485.00" y="835" width="3.22" height="59" fill="#30ffd0"/>
<rect x="1487.92" y="835" width="2.38" height="59" fill="#ffc000"/>
<rect x="1490.00" y="835" width="2.38" height="59" fill="#90ff70"/>
<rect x="1492.08" y="835" width="3.22" height="59" fill="#0060ff"/>
<rect x="1495.00" y="835" width="2.38" height="59" fill="#ffa000"/>
<rect x="1497.08" y="835" width="2.38" height="59" fill="#d0ff30"/>
<rect x="1499.17" y="835" width="3.22" height="59" fill="#ff1000"/>
<rect x="1502.08" y="835" width="4.05" height="59" fill="#ffc000"/>
<rect x="1505.83" y="835" width="3.63" height="59" fill="#c8ff38"/>
<rect x="1509.17" y="835" width="4.88" height="59" fill="#60ffa0"/>
<rect x="1513.75" y="835" width="2.38" height="59" fill="#ff3000"/>
<rect x="1515.83" y="835" width="2.38" height="59" fill="#ffff00"/>
<rect x="1517.92" y="835" width="3.63" height="59" fill="#ff2000"/>
<rect x="1521.25" y="835" width="1.97" height="59" fill="#ffe000"/>
<rect x="1522.92" y="835" width="5.72" height="59" fill="#70ff90"/>
<rect x="1528.33" y="835" width="4.05" height="59" fill="#d8ff28"/>
<rect x="1532.08" y="835" width="3.22" height="59" fill="#ff1000"/>
<rect x="1535.00" y="835" width="4.05" height="59" fill="#ff9000"/>
<rect x="1538.75" y="835" width="3.63" height="59" fill="#ffa800"/>
<rect x="1542.08" y="835" width="2.38" height="59" fill="#40ffc0"/>
<rect x="1544.17" y="835" width="3.63" height="59" fill="#ffa000"/>
<rect x="1547.50" y="835" width="1.97" height="59" fill="#ff7000"/>
<rect x="1549.17" y="835" width="2.38" height="59" fill="#a0ff60"/>
<rect x="1551.25" y="835" width="4.88" height="59" fill="#ff6000"/>
<rect x="1555.83" y="835" width="6.13" height="59" fill="#ff3000"/>
<rect x="1561.67" y="835" width="1.97" height="59" fill="#ff9000"/>
<rect x="1563.33" y="835" width="1.97" height="59" fill="#80ff80"/>
<rect x="1565.00" y="835" width="5.30" height="59" fill="#ffe000"/>
<rect x="1570.00" y="835" width="2.38" height="59" fill="#ff9000"/>
<rect x="1572.08" y="835" width="3.22" height="59" fill="#ff6000"/>
<rect x="1575.00" y="835" width="2.38" height="59" fill="#d00000"/>
<rect x="1577.08" y="835" width="3.22" height="59" fill="#ff6000"/>
<rect x="1580.00" y="835" width="2.38" height="59" fill="#ffff00"/>
<rect x="1582.08" y="835" width="2.38" height="59" fill="#ff6000"/>
<rect x="1584.17" y="835" width="3.22" height="59" fill="#60ffa0"/>
<rect x="1587.08" y="835" width="4.05" height="59" fill="#ffc000"/>
<rect x="1590.83" y="835" width="3.63" height="59" fill="#e00000"/>
<rect x="1594.17" y="835" width="4.05" height="59" fill="#ff9000"/>
<rect x="1597.92" y="835" width="3.22" height="59" fill="#d0ff30"/>
<rect x="1600.83" y="835" width="2.38" height="59" fill="#b00000"/>
<rect x="1602.92" y="835" width="2.38" height="59" fill="#ffff00"/>
<rect x="1605.00" y="835" width="5.30" height="59" fill="#a8ff58"/>
<rect x="1610.00" y="835" width="5.30" height="59" fill="#ffa000"/>
<rect x="1615.00" y="835" width="2.38" height="59" fill="#ff3000"/>
<rect x="1617.08" y="835" width="3.22" height="59" fill="#ffa000"/>
<rect x="1620.00" y="835" width="3.63" height="59" fill="#80ff80"/>
<rect x="1623.33" y="835" width="4.47" height="59" fill="#c8ff38"/>
<rect x="1627.50" y="835" width="1.97" height="59" fill="#ffff00"/>
<rect x="1629.17" y="835" width="2.38" height="59" fill="#60ffa0"/>
<rect x="1631.25" y="835" width="3.22" height="59" fill="#ff9000"/>
<rect x="1634.17" y="835" width="1.97" height="59" fill="#ffe000"/>
<rect x="1635.83" y="835" width="2.38" height="59" fill="#ff3000"/>
<rect x="1637.92" y="835" width="2.38" height="59" fill="#ff9000"/>
<rect x="1640.00" y="835" width="3.22" height="59" fill="#ffa000"/>
<rect x="1642.92" y="835" width="3.22" height="59" fill="#30ffd0"/>
<rect x="1645.83" y="835" width="2.38" height="59" fill="#ffa000"/>
<rect x="1647.92" y="835" width="2.38" height="59" fill="#ffff00"/>
<rect x="1650.00" y="835" width="3.22" height="59" fill="#ff7000"/>
<rect x="1652.92" y="835" width="2.38" height="59" fill="#70ff90"/>
<rect x="1655.00" y="835" width="2.38" height="59" fill="#ff7000"/>
<rect x="1657.08" y="835" width="3.22" height="59" fill="#ffa800"/>
<rect x="1660.00" y="835" width="2.38" height="59" fill="#c0ff40"/>
<rect x="1662.08" y="835" width="2.38" height="59" fill="#ffff00"/>
<rect x="1664.17" y="835" width="3.22" height="59" fill="#ff6000"/>
<rect x="1667.08" y="835" width="1.97" height="59" fill="#70ff90"/>
<rect x="1668.75" y="835" width="5.72" height="59" fill="#ff5000"/>
<rect x="1674.17" y="835" width="5.30" height="59" fill="#ff3000"/>
<rect x="1679.17" y="835" width="1.97" height="59" fill="#ffff00"/>
<rect x="1680.83" y="835" width="2.38" height="59" fill="#10f0ff"/>
<rect x="1682.92" y="835" width="3.63" height="59" fill="#ffc000"/>
<rect x="1686.25" y="835" width="4.05" height="59" fill="#ff9000"/>
<rect x="1690.00" y="835" width="3.22" height="59" fill="#ffa000"/>
<rect x="1692.92" y="835" width="2.38" height="59" fill="#ff1000"/>
<rect x="1695.00" y="835" width="5.30" height="59" fill="#ffa000"/>
<rect x="1700.00" y="835" width="2.38" height="59" fill="#ffff00"/>
<rect x="1702.08" y="835" width="7.38" height="59" fill="#ff7000"/>
<rect x="1709.17" y="835" width="3.22" height="59" fill="#ffc000"/>
<rect x="1712.08" y="835" width="4.05" height="59" fill="#ff4000"/>
<rect x="1715.83" y="835" width="3.63" height="59" fill="#a0ff60"/>
<rect x="1719.17" y="835" width="2.38" height="59" fill="#ffa800"/>
<rect x="1721.25" y="835" width="1.97" height="59" fill="#ffe800"/>
<rect x="1722.92" y="835" width="3.22" height="59" fill="#ff8800"/>
<rect x="1725.83" y="835" width="2.38" height="59" fill="#b0ff50"/>
<rect x="1727.92" y="835" width="5.30" height="59" fill="#ff5800"/>
<rect x="1732.92" y="835" width="2.38" height="59" fill="#ffff00"/>
<rect x="1735.00" y="835" width="2.38" height="59" fill="#ff5000"/>
<rect x="1737.08" y="835" width="3.22" height="59" fill="#0090ff"/>
<rect x="1740.00" y="835" width="7.38" height="59" fill="#e0ff20"/>
<rect x="1747.08" y="835" width="1.97" height="59" fill="#ffe000"/>
<rect x="1748.75" y="835" width="3.22" height="59" fill="#ff9000"/>
<rect x="1751.67" y="835" width="2.38" height="59" fill="#ff1000"/>
<rect x="1753.75" y="835" width="2.38" height="59" fill="#ffa000"/>
<rect x="1755.83" y="835" width="5.30" height="59" fill="#c0ff40"/>
<rect x="1760.83" y="835" width="5.30" height="59" fill="#ff7000"/>
<rect x="1765.83" y="835" width="2.80" height="59" fill="#ffa000"/>
<rect x="1768.33" y="835" width="4.88" height="59" fill="#ff6000"/>
<rect x="1772.92" y="835" width="2.38" height="59" fill="#ffff00"/>
<rect x="1775.00" y="835" width="3.22" height="59" fill="#80ff80"/>
<rect x="1777.92" y="835" width="7.38" height="59" fill="#ffa000"/>
<rect x="1785.00" y="835" width="6.97" height="59" fill="#ff4000"/>
<rect x="1791.67" y="835" width="2.38" height="59" fill="#ffff00"/>
<rect x="1793.75" y="835" width="2.38" height="59" fill="#20ffe0"/>
<rect x="1795.83" y="835" width="4.47" height="59" fill="#ffa000"/>
<rect x="1800.00" y="835" width="1.13" height="59" fill="#ff6000"/>
<rect x="1800.83" y="835" width="2.67" height="59" fill="#ffff00"/>
<rect x="1803.20" y="835" width="5.04" height="59" fill="#ff6000"/>
<rect x="1807.94" y="835" width="3.35" height="59" fill="#800000"/>
<rect x="1810.99" y="835" width="2.33" height="59" fill="#ffff00"/>
<rect x="1813.02" y="835" width="1.99" height="59" fill="#90ff70"/>
<rect x="1814.71" y="835" width="3.69" height="59" fill="#ffd800"/>
<rect x="1818.10" y="835" width="2.33" height="59" fill="#b0ff50"/>
<rect x="1820.13" y="835" width="5.04" height="59" fill="#ffc000"/>
<rect x="1824.87" y="835" width="2.33" height="59" fill="#ffe800"/>
<rect x="1826.90" y="835" width="2.33" height="59" fill="#ffc800"/>
<rect x="1828.93" y="835" width="3.69" height="59" fill="#f0ff10"/>
<rect x="1832.32" y="835" width="2.33" height="59" fill="#90ff70"/>
<rect x="1834.35" y="835" width="1.99" height="59" fill="#20ffe0"/>
<rect x="1836.04" y="835" width="3.01" height="59" fill="#0070ff"/>
<rect x="1838.75" y="835" width="2.67" height="59" fill="#30ffd0"/>
<rect x="1841.12" y="835" width="3.35" height="59" fill="#ffa000"/>
<rect x="1844.17" y="835" width="1.99" height="59" fill="#c0ff40"/>
<rect x="1845.86" y="835" width="2.33" height="59" fill="#ff6000"/>
<rect x="1847.89" y="835" width="3.35" height="59" fill="#f0ff10"/>
<rect x="1850.94" y="835" width="4.36" height="59" fill="#c8ff38"/>
<rect x="1855.00" y="835" width="3.69" height="59" fill="#b8ff48"/>
<rect x="1858.39" y="835" width="1.99" height="59" fill="#ffff00"/>
<rect x="1860.08" y="835" width="1.99" height="59" fill="#ff9000"/>
<rect x="1861.77" y="835" width="5.38" height="59" fill="#ffd000"/>
<rect x="1866.85" y="835" width="2.33" height="59" fill="#ff9000"/>
<rect x="1868.88" y="835" width="5.38" height="59" fill="#40ffc0"/>
<rect x="1873.96" y="835" width="5.04" height="59" fill="#80ff80"/>
<rect x="1878.70" y="835" width="5.38" height="59" fill="#ffb000"/>
<rect x="1883.78" y="835" width="4.36" height="59" fill="#d8ff28"/>
<rect x="1887.84" y="835" width="3.35" height="59" fill="#ffd000"/>
<rect x="1890.89" y="835" width="2.33" height="59" fill="#0060ff"/>
<rect x="1892.92" y="835" width="5.38" height="59" fill="#90ff70"/>
<rect x="1897.99" y="835" width="2.33" height="59" fill="#10d0ff"/>
<rect x="1900.03" y="835" width="5.38" height="59" fill="#ffc800"/>
<rect x="1905.10" y="835" width="2.33" height="59" fill="#0090ff"/>
<rect x="1907.14" y="835" width="3.01" height="59" fill="#0050ff"/>
</svg>
<div class="a" style="left:75px;top:967px;width:1845px;height:65px;background:linear-gradient(#cfcfcf,#f8f8f8);"></div>
<div class="a" style="left:219px;top:967px;width:1px;height:64px;background:#7a7a7a;"></div>
<div class="t" style="left:86px;top:974px;font-size:15px;letter-spacing:-0.1px;color:#000;">Record raw data</div>
<div class="a" style="left:125px;top:999px;width:47px;height:23px;box-sizing:border-box;border:1px solid #6f7074;border-radius:12px;background:#7e7f83;"></div>
<div class="a" style="left:123.5px;top:997px;width:28px;height:28px;border-radius:50%;background:linear-gradient(#fbfbfb,#ececec);box-shadow:0 1px 2px rgba(0,0,0,0.25);"></div>
<div class="a" style="left:1808px;top:974px;width:100px;height:50px;border-radius:8px;background:#30472d;"></div>
<div class="a" style="left:1852px;top:984px;width:12px;height:12px;background:#fff;"></div>
<div class="t" style="left:1808px;top:1005px;width:100px;text-align:center;font-size:13px;color:#fff;">Stop</div>

</body></html>
